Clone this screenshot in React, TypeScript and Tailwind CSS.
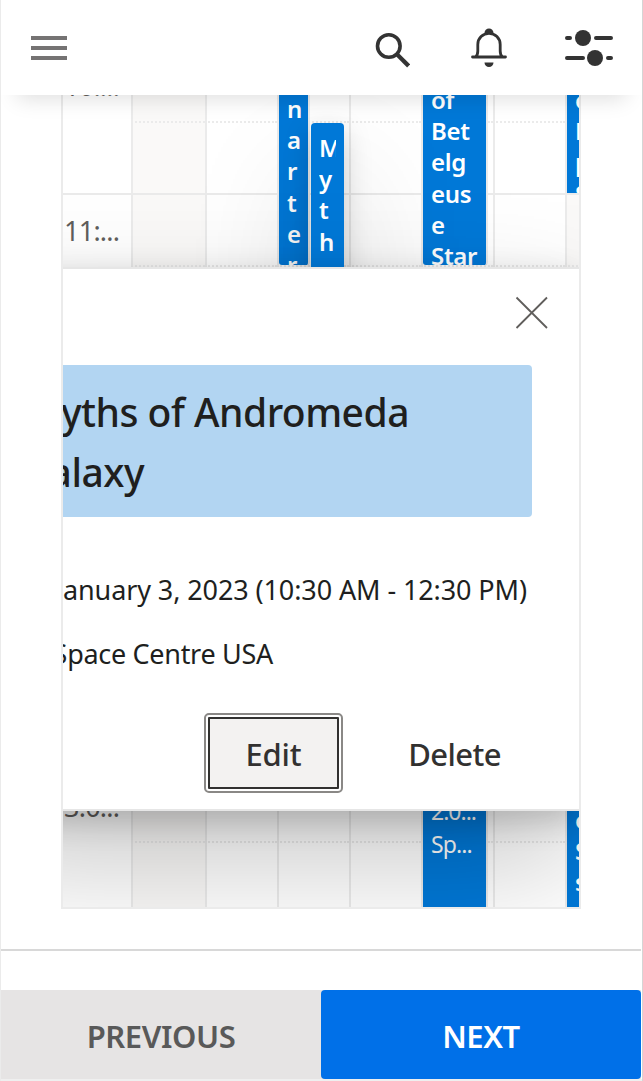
import type { ReactNode } from 'react';

type Cell = { height: string; line: string };

const CELLS: Cell[] = [
  { height: 'h-[28px]', line: 'border-b-2 border-dotted' },
  { height: 'h-[72px]', line: 'border-b-2' },
  { height: 'h-[72px]', line: 'border-b-2 border-dotted' },
  { height: 'h-[72px]', line: 'border-b-2' },
  { height: 'h-[72px]', line: 'border-b-2 border-dotted' },
  { height: 'h-[72px]', line: 'border-b-2' },
  { height: 'h-[72px]', line: 'border-b-2 border-dotted' },
  { height: 'h-[72px]', line: 'border-b-2' },
  { height: 'h-[72px]', line: 'border-b-2 border-dotted' },
  { height: 'h-[72px]', line: 'border-b-2' },
  { height: 'h-[72px]', line: 'border-b-2 border-dotted' },
  { height: 'h-[64px]', line: '' },
];

const HOURS = ['11:...', '12:...', '1:0...', '2:0...', '3:0...'];

function Column({ width, shaded, children }: { width: string; shaded?: boolean; children?: ReactNode }) {
  return (
    <div className={`relative shrink-0 ${width}`}>
      {CELLS.map((cell, i) => (
        <div
          key={i}
          className={`${cell.height} ${shaded ? 'bg-[#faf9f8]' : 'bg-white'} border-l-2 border-[#ebebeb] [border-left-style:solid] ${cell.line}`}
        />
      ))}
      {children}
    </div>
  );
}

function Lines({ items, className }: { items: string[]; className: string }) {
  return (
    <div className={`overflow-hidden text-[24px] font-semibold leading-[31.2px] ${className}`}>
      {items.map((t, i) => (
        <div key={i}>{t}</div>
      ))}
    </div>
  );
}

function Scheduler() {
  return (
    <section className="relative mx-[60px] flex h-[814px] w-[520px] overflow-hidden border-x-2 border-b-2 border-[#ebebeb] bg-white">
      <div className="w-[68px] shrink-0 text-[27px] tracking-[-0.75px] text-[#605e5c]">
        <div className="flow-root h-[100px] border-b-2 border-[#ebebeb] pl-px">
          <div className="-mt-[45px] h-[72px] leading-[72px]">10:...</div>
        </div>
        {HOURS.map((h) => (
          <div key={h} className="h-[144px] border-b-2 border-[#ebebeb] pl-px leading-[72px]">
            {h}
          </div>
        ))}
      </div>
      <Column width="w-[74px]" shaded />
      <Column width="w-[72px]" />
      <Column width="w-[72px]">
        <div className="absolute left-[2px] top-0 h-[170px] w-[31px] overflow-hidden rounded-b-[3px] border-r-2 border-[#ebebeb] bg-[#0078d7] pl-[8px] text-white">
          <Lines className="-mt-[2px]" items={['n', 'a', 'r', 't', 'e', 'r']} />
        </div>
        <div className="absolute left-[34px] top-[28px] z-10 h-[288px] w-[33px] rounded-[4px] bg-[#0078d7] px-[8px] pt-[9px] text-white shadow-[0_51px_115px_rgba(0,0,0,0.22),0_10px_29px_rgba(0,0,0,0.18)]">
          <Lines className="" items={['M', 'y', 't', 'h', 's']} />
        </div>
      </Column>
      <Column width="w-[72px]" />
      <Column width="w-[72px]">
        <div className="absolute left-[2px] top-0 h-[170px] w-[65px] overflow-hidden rounded-b-[3px] border-r-2 border-[#ebebeb] bg-[#0078d7] pl-[8px] text-white">
          <Lines className="-mt-[11px] tracking-[-0.3px]" items={['of', 'Bet', 'elg', 'eus', 'e', 'Star']} />
        </div>
        <div className="absolute left-[2px] top-[600px] h-[212px] w-[65px] overflow-hidden border-r-2 border-[#ebebeb] bg-[#0078d7] pl-[8px] pt-[100px] text-[23px] leading-[33px] text-white">
          <div className="tracking-[-1px]">2:0...</div>
          <div className="tracking-[-0.9px]">Sp...</div>
        </div>
      </Column>
      <Column width="w-[72px]" />
      <Column width="w-[72px]" shaded>
        <div className="absolute left-[2px] top-0 h-[98px] w-[65px] overflow-hidden bg-[#0078d7] pl-[8px] text-white">
          <Lines className="-mt-[11px]" items={['of', 'De', 'par', 'Se']} />
        </div>
        <div className="absolute left-[2px] top-[600px] h-[212px] w-[65px] overflow-hidden bg-[#0078d7] pl-[8px] pt-[109px] text-white">
          <Lines className="" items={['of', 'So', 'sp']} />
        </div>
      </Column>
      <EventPopup />
    </section>
  );
}

function EventPopup() {
  return (
    <div className="absolute right-0 top-[172px] z-20 flex h-[544px] w-[606px] flex-col border-y-2 border-[#e6e6e6] bg-white pl-[48px] pr-[47px] shadow-[0_51px_115px_rgba(0,0,0,0.22),0_10px_29px_rgba(0,0,0,0.18)]">
      <div className="flex h-[96px] items-center justify-end">
        <svg className="-mr-[17px] -mt-[8px] h-[34px] w-[34px]" viewBox="0 0 34 34" fill="none" stroke="#605e5c" strokeWidth="1.8">
          <path d="M1.5 1.5 32 32M32 1.5 1.5 32" />
        </svg>
      </div>
      <div className="h-[152px] rounded-[4px] bg-[#b2d5f2] py-[17px] text-[39px] font-medium leading-[60px] text-[#201f1e]">
        <div className="ml-[-60px] flex w-[448px] justify-end whitespace-nowrap tracking-[-0.5px]">Myths of Andromeda</div>
        <div className="ml-[-60px] flex w-[183px] justify-end tracking-[-0.5px]">Galaxy</div>
      </div>
      <div className="mt-[41px] flex h-[64px] items-center justify-end whitespace-nowrap pr-[5px] text-[27px] tracking-[-0.1px] text-[#201f1e]">
        Tuesday, January 3, 2023 (10:30 AM - 12:30 PM)
      </div>
      <div className="flex h-[64px] w-[252px] items-center justify-end whitespace-nowrap text-[27px] tracking-[-0.3px] text-[#201f1e]">
        Space Centre USA
      </div>
      <div className="mt-[31px] flex items-center justify-end text-[31px] font-medium text-[#323130]">
        <button className="mr-[32px] flex h-[72px] w-[131px] items-center justify-center rounded-[1px] border-2 border-[#323130] bg-[#f3f2f1] pt-[2px] tracking-[-0.2px] outline-2 outline-offset-2 outline-[#8a8886]">
          Edit
        </button>
        <button className="flex h-[72px] w-[161px] items-center justify-center pl-[6px] pt-[2px] tracking-[-0.6px]">Delete</button>
      </div>
    </div>
  );
}

function Header() {
  return (
    <header className="relative z-30 flex h-[95px] shrink-0 items-center justify-between bg-white pl-[30px] pr-[29px] shadow-[0_20px_20px_-16px_rgba(0,0,0,0.13)]">
      <button aria-label="Menu" className="flex w-[36px] flex-col gap-[6px]">
        <span className="h-[4px] bg-[#757373]" />
        <span className="h-[4px] bg-[#757373]" />
        <span className="h-[4px] bg-[#757373]" />
      </button>
      <div className="flex items-center">
        <svg className="mr-[60px] mt-[4px] h-[36px] w-[36px]" viewBox="0 0 36 36" fill="none" stroke="#333">
          <circle cx="14.8" cy="14" r="11.3" strokeWidth="3.6" />
          <path d="m23.2 22.5 11.4 11.4" strokeWidth="4.2" />
        </svg>
        <svg className="mr-[57px] h-[42px] w-[38px]" viewBox="0 0 38 42" fill="none" stroke="#333">
          <path
            d="M2.5 30h33M5.5 30c1.8-1.5 2.3-3.5 2.3-6v-6.5a11.2 11.2 0 0 1 22.4 0V24c0 2.5.5 4.5 2.3 6"
            strokeWidth="2.8"
            strokeLinecap="round"
          />
          <path d="M14.5 6a4.5 4.5 0 0 1 9 0zM14.5 35.5h9a4.5 4.5 0 0 1-9 0z" fill="#333" stroke="none" />
        </svg>
        <svg className="h-[40px] w-[48px]" viewBox="0 0 48 40" fill="#333" stroke="#333" strokeWidth="4" strokeLinecap="round">
          <path d="M2 10h3M31 10h15M2 30h16M43 30h3" />
          <circle cx="18" cy="10" r="8" stroke="none" />
          <circle cx="30" cy="30" r="8" stroke="none" />
        </svg>
      </div>
    </header>
  );
}

export default function App() {
  return (
    <main className="flex h-[1081px] w-[643px] flex-col overflow-hidden border-l border-r border-l-[#ebebeb] border-r-[#d5d5d5] bg-white font-['Noto_Sans','Open_Sans',sans-serif]">
      <Header />
      <Scheduler />
      <div className="mr-px mt-[40px] h-[2px] shrink-0 bg-[#d8d8d8]" />
      <footer className="mr-px mt-[39px] flex h-[89px] shrink-0 bg-[#e6e4e4] text-[31px] font-semibold">
        <button className="flex flex-1 items-center justify-center pt-[4px] tracking-[-0.4px] text-[#595959]">PREVIOUS</button>
        <button className="flex flex-1 items-center justify-center rounded-[4px] bg-[#0070e8] pt-[4px] tracking-[-0.4px] text-white">NEXT</button>
      </footer>
      <div className="h-[2px] shrink-0 bg-[#efefef]" />
    </main>
  );
}
